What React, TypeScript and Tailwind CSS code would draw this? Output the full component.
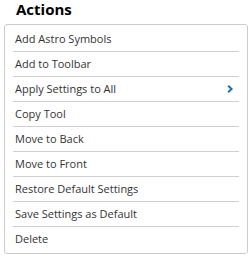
const items = [
  "Add Astro Symbols",
  "Add to Toolbar",
  "Apply Settings to All",
  "Copy Tool",
  "Move to Back",
  "Move to Front",
  "Restore Default Settings",
  "Save Settings as Default",
  "Delete",
];

export default function App() {
  return (
    <div className="w-[251px] h-[258px] bg-white font-['Open_Sans',sans-serif] text-[#333]">
      <h2 className="pl-4 h-[24px] text-[15px] leading-[18px] font-bold text-black">Actions</h2>
      <div className="ml-1 w-[244px] border border-[#ccc] rounded-[3px] pt-[2px] pb-[1px]">
        {items.map((label, i) => (
          <div
            key={label}
            className={`mx-2 px-[2px] h-[25px] flex items-center justify-between text-[11px] ${
              i < items.length - 1 ? "border-b border-[#d0d0d0]" : ""
            }`}
          >
            <span>{label}</span>
            {label === "Apply Settings to All" && (
              <svg width="6" height="8" viewBox="0 0 6 8" className="mr-[4px]">
                <path d="M1.2 0.8 L4.6 4 L1.2 7.2" stroke="#1a6bb5" strokeWidth="2" fill="none" />
              </svg>
            )}
          </div>
        ))}
      </div>
    </div>
  );
}
